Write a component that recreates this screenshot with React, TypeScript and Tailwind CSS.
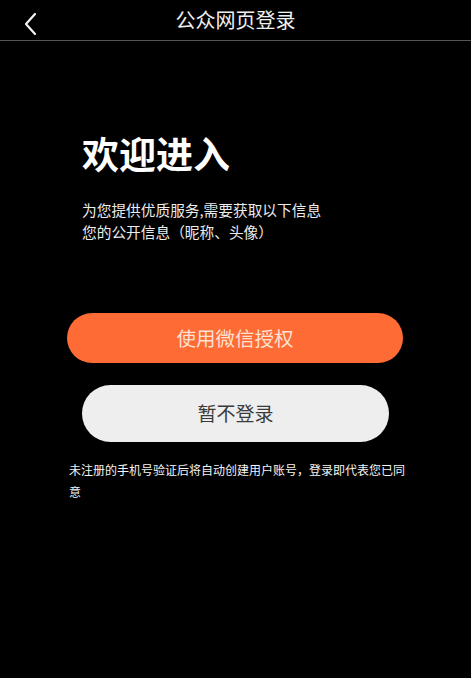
import React from 'react';

const font = { fontFamily: '"Noto Sans CJK SC", "Noto Sans", sans-serif' };

const App: React.FC = () => {
    return (
        <div className="w-[471px] h-[678px] bg-black text-white overflow-hidden" style={font}>
            {/* header */}
            <div className="relative h-[41px] border-b border-[#555] flex items-center justify-center">
                <button className="absolute left-[18px] top-[8px] p-1">
                    <svg width="16" height="24" viewBox="0 0 16 24" fill="none">
                        <path d="M13 2 L4 12 L13 22" stroke="#f2f2f2" strokeWidth="2.2" strokeLinecap="round" strokeLinejoin="round" />
                    </svg>
                </button>
                <h1 className="text-[20px] leading-none text-[#f0f0f0] font-normal">公众网页登录</h1>
            </div>

            <div className="flex flex-col">
                <div className="pl-[82px] mt-[94px]">
                    <h2 className="text-[37px] leading-none font-bold text-white">欢迎进入</h2>
                    <div className="mt-[27px] text-[14.7px] leading-[22px] text-[#ececec]">
                        <p>为您提供优质服务,需要获取以下信息</p>
                        <p>您的公开信息（昵称、头像）</p>
                    </div>
                </div>

                <button className="mt-[70px] ml-[67px] w-[336px] h-[50px] rounded-full bg-[#fe6b35] text-[19.5px] text-[#fde2d4] flex items-center justify-center">
                    使用微信授权
                </button>

                <button className="mt-[22px] ml-[82px] w-[307px] h-[57px] rounded-full bg-[#eeeeee] text-[19px] text-[#3a3a3a] flex items-center justify-center">
                    暂不登录
                </button>

                <p className="mt-[17px] ml-[69px] w-[340px] text-[12px] leading-[22px] text-[#f4f4f4]">
                    未注册的手机号验证后将自动创建用户账号，登录即代表您已同意
                </p>
            </div>
        </div>
    );
};

export default App;
